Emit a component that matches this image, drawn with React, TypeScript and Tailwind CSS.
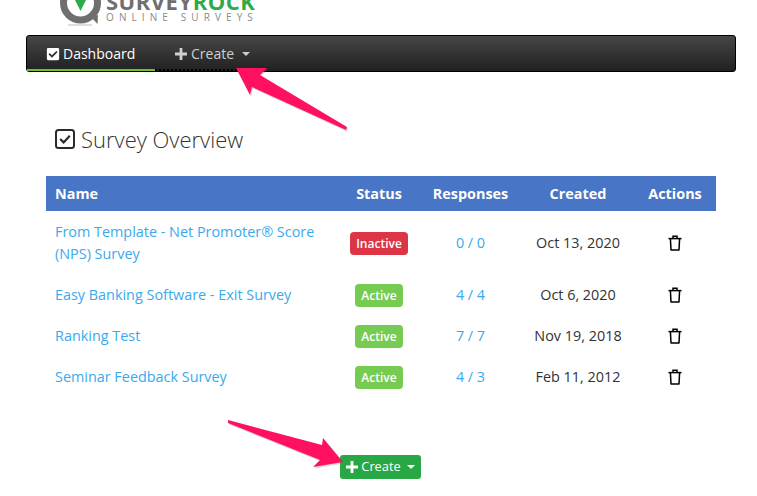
import { FaCheckSquare } from "react-icons/fa";

const surveys = [
  { name: "From Template - Net Promoter® Score (NPS) Survey", active: false, responses: "0 / 0", created: "Oct 13, 2020", tall: true },
  { name: "Easy Banking Software - Exit Survey", active: true, responses: "4 / 4", created: "Oct 6, 2020" },
  { name: "Ranking Test", active: true, responses: "7 / 7", created: "Nov 19, 2018" },
  { name: "Seminar Feedback Survey", active: true, responses: "4 / 3", created: "Feb 11, 2012" },
];

function Trash() {
  return (
    <svg width="14" height="16" viewBox="0 0 14 16" fill="none" stroke="#000" strokeWidth="1.5" className="mx-auto">
      <path d="M0.5 3.6H13.5" />
      <path d="M5 3.4V1.2H9V3.4" />
      <path d="M2.4 3.6L3 15H11L11.6 3.6" strokeLinejoin="round" />
    </svg>
  );
}

function Plus({ size, className }: { size: number; className?: string }) {
  return (
    <svg width={size} height={size} viewBox="0 0 12 12" className={className} stroke="currentColor" strokeWidth="2.8">
      <path d="M6 0V12M0 6H12" />
    </svg>
  );
}

function Caret({ color }: { color: string }) {
  return <span className={`inline-block w-0 h-0 border-x-[4px] border-x-transparent border-t-[4px] ${color}`} />;
}

function Logo() {
  return (
    <div className="h-[35px] overflow-hidden pl-[60px] flex gap-[4px]">
      <svg width="42" height="27" viewBox="0 0 42 27" className="shrink-0">
        <circle cx="20.5" cy="3" r="17" fill="none" stroke="#6f6f6f" strokeWidth="7" />
        <path d="M31 17L38 15L37.5 24Z" fill="#6f6f6f" />
        <path d="M14 -2H27L20.5 11Z" fill="#2eaa4a" />
        <path d="M8 25H32" stroke="#bbb" strokeWidth="1" />
      </svg>
      <div className="flex flex-col w-[160px]">
        <div className="-mt-[7px] h-[16px] text-[22px] leading-[16px] font-bold whitespace-nowrap tracking-[0.5px] text-[#6f6f6f]">
          SURVEY<span className="text-[#2eaa4a]">ROCK</span>
        </div>
        <div className="mt-[2px] text-[10px] leading-[12px] tracking-[5.1px] text-[#8a8a8a] whitespace-nowrap">ONLINE SURVEYS</div>
      </div>
    </div>
  );
}

export default function App() {
  return (
    <div className="relative w-[757px] h-[496px] overflow-hidden bg-white font-['Open_Sans',sans-serif] text-[14.4px] text-[#333]">
      <Logo />

      <nav className="ml-[26px] w-[710px] h-[37px] flex rounded-[3px] border border-black bg-gradient-to-b from-[#474747] to-[#212121] text-[14px]">
        <div className="w-[128px] h-[35px] pt-[2px] border-b-[2px] border-[#76bf26] flex items-center gap-[3px] pl-[19px] text-white">
          <FaCheckSquare className="w-[14px] h-[14px]" />
          Dashboard
        </div>
        <div className="w-[110px] h-[35px] pt-[2px] border-b-[2px] border-dotted border-black flex items-center pl-[20px] text-[#cfcfcf]">
          <Plus size={12} className="mr-[4px]" />
          Create
          <span className="ml-[8px] flex">
            <Caret color="border-t-[#cfcfcf]" />
          </span>
        </div>
      </nav>

      <h1 className="mt-[52px] ml-[55px] h-[30px] flex items-center gap-[6px] text-[22px] font-light text-[#333]">
        <svg width="20" height="20" viewBox="0 0 20 20" fill="none" stroke="#2b2b2b" className="shrink-0">
          <rect x="1" y="1" width="18" height="18" rx="2.5" strokeWidth="2" />
          <path d="M5.2 10L8.6 13.4L14.8 6.8" strokeWidth="2.2" />
        </svg>
        Survey Overview
      </h1>

      <table className="mt-[22px] ml-[46px] w-[670px] table-fixed border-collapse">
        <colgroup>
          <col className="w-[293px]" />
          <col className="w-[80px]" />
          <col className="w-[103px]" />
          <col className="w-[112px]" />
          <col className="w-[82px]" />
        </colgroup>
        <thead>
          <tr className="h-[35px] bg-[#4875c5] text-white font-bold">
            <th className="pl-[9px] text-left">Name</th>
            <th>Status</th>
            <th>Responses</th>
            <th>Created</th>
            <th>Actions</th>
          </tr>
        </thead>
        <tbody>
          {surveys.map((s) => (
            <tr key={s.name} className={s.tall ? "h-[63px]" : "h-[41px]"}>
              <td className="pl-[9px] pr-[9px] leading-[22px] text-[#3aa9ee]">{s.name}</td>
              <td className="text-center">
                <span
                  className={`inline-block mt-[2px] rounded-[4px] text-white text-[12px] font-semibold leading-[23px] px-[6px] align-middle ${
                    s.active ? "bg-[#76cc52]" : "bg-[#dc3545]"
                  }`}
                >
                  {s.active ? "Active" : "Inactive"}
                </span>
              </td>
              <td className="text-center text-[#3aa9ee]">{s.responses}</td>
              <td className="text-center">{s.created}</td>
              <td>
                <Trash />
              </td>
            </tr>
          ))}
        </tbody>
      </table>

      <div className="mt-[58px] flex justify-center pl-[4px]">
        <button className="h-[24px] w-[81px] rounded-[3px] bg-[#28a745] text-white text-[12.8px] flex items-center justify-center">
          <Plus size={12} className="mr-[3px]" />
          Create
          <span className="ml-[6px] flex">
            <Caret color="border-t-white" />
          </span>
        </button>
      </div>

      {/* annotation arrows */}
      <svg width="757" height="496" className="absolute inset-0 pointer-events-none">
        <polygon points="347,127 260,75 267,68 236,68 250,95 252,87 346,130" fill="#7a7a7a" opacity="0.3" transform="translate(1,1.5)" />
        <polygon points="347,127 260,75 267,68 236,68 250,95 252,87 346,130" fill="#ff1060" />
        <polygon points="228,420 322,445 323,438 343,462 313,467 320,460 228,423" fill="#7a7a7a" opacity="0.3" transform="translate(1,1.5)" />
        <polygon points="228,420 322,445 323,438 343,462 313,467 320,460 228,423" fill="#ff1060" />
      </svg>
    </div>
  );
}
